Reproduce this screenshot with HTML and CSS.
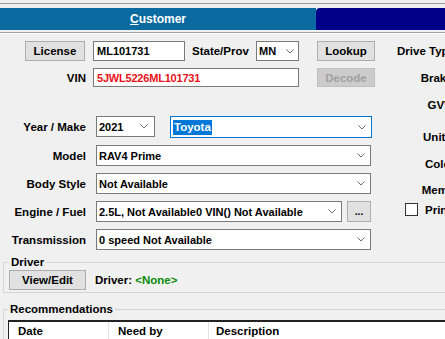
FILE: index.html
```html
<!DOCTYPE html>
<html lang="en">
<head>
  <meta charset="UTF-8">
  <meta name="viewport" content="width=device-width, initial-scale=1.0">
  <title>Customer vehicle</title>
  <link rel="stylesheet" href="styles.css">
</head>
<body>
  <div class="topbar"></div>

  <!-- tab strip -->
  <div class="tabs">
    <div class="tab tab-active"><u>C</u>ustomer</div>
    <div class="tab tab-next"></div>
  </div>
  <div class="tabs-rule"></div>

  <div class="upper">
    <!-- vehicle form -->
    <div class="form">
      <div class="row row-first">
        <div class="lbl"><button class="btn btn-license">License</button></div>
        <div class="input w-plate">ML101731</div>
        <span class="inline-lbl">State/Prov</span>
        <div class="select w-state"><span>MN</span><svg class="chev" viewBox="0 0 8 5"><path d="M0.5 0.5 L4 4 L7.5 0.5"/></svg></div>
        <button class="btn btn-side">Lookup</button>
      </div>
      <div class="row row-vin">
        <div class="lbl">VIN</div>
        <div class="input w-vin vin-text">5JWL5226ML101731</div>
        <button class="btn btn-side" disabled>Decode</button>
      </div>
      <div class="row row-make">
        <div class="lbl">Year / Make</div>
        <div class="select w-year"><span>2021</span><svg class="chev" viewBox="0 0 8 5"><path d="M0.5 0.5 L4 4 L7.5 0.5"/></svg></div>
        <div class="select w-make focused"><span class="sel-text">Toyota</span><svg class="chev" viewBox="0 0 8 5"><path d="M0.5 0.5 L4 4 L7.5 0.5"/></svg></div>
      </div>
      <div class="row row-sel">
        <div class="lbl">Model</div>
        <div class="select w-full"><span>RAV4 Prime</span><svg class="chev" viewBox="0 0 8 5"><path d="M0.5 0.5 L4 4 L7.5 0.5"/></svg></div>
      </div>
      <div class="row row-sel">
        <div class="lbl">Body Style</div>
        <div class="select w-full"><span>Not Available</span><svg class="chev" viewBox="0 0 8 5"><path d="M0.5 0.5 L4 4 L7.5 0.5"/></svg></div>
      </div>
      <div class="row row-sel">
        <div class="lbl">Engine / Fuel</div>
        <div class="select w-engine"><span>2.5L, Not Available0 VIN() Not Available</span><svg class="chev" viewBox="0 0 8 5"><path d="M0.5 0.5 L4 4 L7.5 0.5"/></svg></div>
        <button class="btn btn-dots">...</button>
      </div>
      <div class="row row-sel">
        <div class="lbl">Transmission</div>
        <div class="select w-full"><span>0 speed Not Available</span><svg class="chev" viewBox="0 0 8 5"><path d="M0.5 0.5 L4 4 L7.5 0.5"/></svg></div>
      </div>
    </div>

    <!-- right column, cut off by the window -->
    <div class="side">
      <div class="side-lbl s-drive">Drive Type</div>
      <div class="side-lbl s-brake">Brakes</div>
      <div class="side-lbl s-gvw">GVW</div>
      <div class="side-lbl s-unit">Unit #</div>
      <div class="side-lbl s-color">Color</div>
      <div class="side-lbl s-memo">Memo</div>
      <label class="side-check"><span class="box"></span>Print VIN</label>
    </div>
  </div>

  <fieldset class="group group-driver">
    <legend>Driver</legend>
    <div class="driver-row">
      <button class="btn btn-view">View/Edit</button>
      <span class="driver-text">Driver: <span class="none">&lt;None&gt;</span></span>
    </div>
  </fieldset>

  <fieldset class="group group-rec">
    <legend>Recommendations</legend>
    <div class="grid">
      <div class="cell c-date">Date</div>
      <div class="cell c-need">Need by</div>
      <div class="cell c-desc">Description</div>
    </div>
  </fieldset>
</body>
</html>
```

FILE: styles.css
```css
html {
  overflow: hidden;
}
body {
  margin: 0;
  width: 445px;
  height: 339px;
  overflow: hidden;
  background: #f0f0f0;
  font-family: "Liberation Sans", Arial, sans-serif;
  font-size: 11.5px;
  font-weight: bold;
  color: #000;
}
/* top strip and tabs */
.topbar {
  height: 3px;
  border-bottom: 1px solid #9a9a9a;
  margin-bottom: 4px;
}
.tabs {
  display: flex;
  height: 22px;
}
.tab {
  line-height: 22px;
  color: #fff;
  font-size: 12px;
  text-align: center;
}
.tab-active {
  width: 316px;
  background: #0b6aa0;
}
.tab-next {
  flex: 1;
  background: #000089;
  border-top-left-radius: 4px;
}
.tabs-rule {
  margin-top: 2px;
  border-top: 1px solid #a0a0a0;
  border-bottom: 1px solid #fff;
}
/* form */
.upper {
  display: flex;
}
.form {
  width: 380px;
  flex-shrink: 0;
  padding-top: 7px;
}
.row {
  display: flex;
  align-items: center;
}
.row-first {
  height: 20px;
}
.row-vin {
  height: 19px;
  margin-top: 7px;
}
.row-make {
  height: 22px;
  margin-top: 29px;
  align-items: flex-start;
}
.row-sel {
  height: 21px;
  margin-top: 7px;
}
.lbl {
  width: 86px;
  flex-shrink: 0;
  display: flex;
  justify-content: flex-end;
  white-space: nowrap;
}
.row-make .lbl {
  line-height: 22px;
}
.inline-lbl {
  width: 64px;
  margin-left: 7px;
}
.input,
.select {
  box-sizing: border-box;
  height: 100%;
  background: #fff;
  border: 1px solid #7a7a7a;
  display: flex;
  align-items: center;
  white-space: nowrap;
  overflow: hidden;
  font-size: 11px;
}
.input {
  margin-left: 7px;
  padding-left: 3px;
}
.select {
  margin-left: 10px;
  padding: 0 5px 0 2px;
  justify-content: space-between;
}
.chev {
  width: 8px;
  height: 5px;
  flex-shrink: 0;
  fill: none;
  stroke: #6d6d6d;
  stroke-width: 1;
}
.w-plate { width: 92px; }
.w-vin { width: 206px; letter-spacing: -0.2px; }
.w-state { width: 43px; margin-left: 0; padding-right: 4px; }
.w-year { width: 59px; height: 21px; padding-right: 6px; }
.w-make { width: 202px; margin-left: 15px; height: 22px; }
.w-full { width: 275px; }
.w-engine { width: 246px; }
.vin-text {
  color: #e8111a;
}
.focused {
  border-color: #0078d7;
}
.sel-text {
  background: #0078d7;
  color: #fff;
  font-size: 11.5px;
  line-height: 15px;
  padding: 0 1px;
}
/* buttons */
.btn {
  font-family: inherit;
  font-size: 11.5px;
  font-weight: bold;
  color: #000;
  background: #e1e1e1;
  border: 1px solid #adadad;
  padding: 0;
  height: 100%;
}
.btn-license {
  width: 60px;
  height: 20px;
  margin-right: 1px;
}
.btn-side {
  width: 58px;
  margin-left: 18px;
}
.btn:disabled {
  background: #cccccc;
  border-color: #bfbfbf;
  color: #a0a0a0;
}
.btn-dots {
  width: 24px;
  margin-left: 5px;
  font-size: 10px;
  line-height: 10px;
}
/* right column */
.side {
  width: 75px;
  flex-shrink: 0;
  padding-top: 10px;
  text-align: right;
  white-space: nowrap;
}
.side-lbl {
  line-height: 14px;
}
.s-brake,
.s-gvw,
.s-color {
  margin-top: 13px;
}
.s-brake {
  margin-right: -4px;
}
.s-unit {
  margin-top: 18px;
}
.s-memo {
  margin-top: 12px;
}
.side-check {
  display: flex;
  align-items: center;
  margin-top: 6px;
  margin-left: 25px;
  text-align: left;
}
.box {
  flex-shrink: 0;
  width: 11px;
  height: 11px;
  background: #fff;
  border: 1px solid #333;
  margin-right: 7px;
}
/* group boxes */
.group {
  margin: 5px 0 0 3px;
  border: 1px solid #d5d5d5;
  border-right: none;
  padding: 1px 0 2px 5px;
}
.group legend {
  padding: 0 2px;
  line-height: 14px;
}
.driver-row {
  display: flex;
  align-items: center;
  height: 20px;
}
.btn-view {
  width: 77px;
}
.driver-text {
  margin-left: 9px;
}
.none {
  color: #0a8a0a;
}
.group-rec {
  margin-top: 9px;
  padding: 4px 0 0 4px;
  border-bottom: none;
}
.grid {
  display: flex;
  height: 17px;
  background: #fff;
  border-top: 2px solid #222;
  border-left: 1px solid #222;
}
.cell {
  height: 17px;
  line-height: 19px;
  padding-left: 9px;
  box-sizing: border-box;
  border-right: 1px solid #e3e3e3;
}
.c-date { width: 100px; }
.c-need { width: 100px; }
.c-desc { width: 240px; padding-left: 7px; }
```
